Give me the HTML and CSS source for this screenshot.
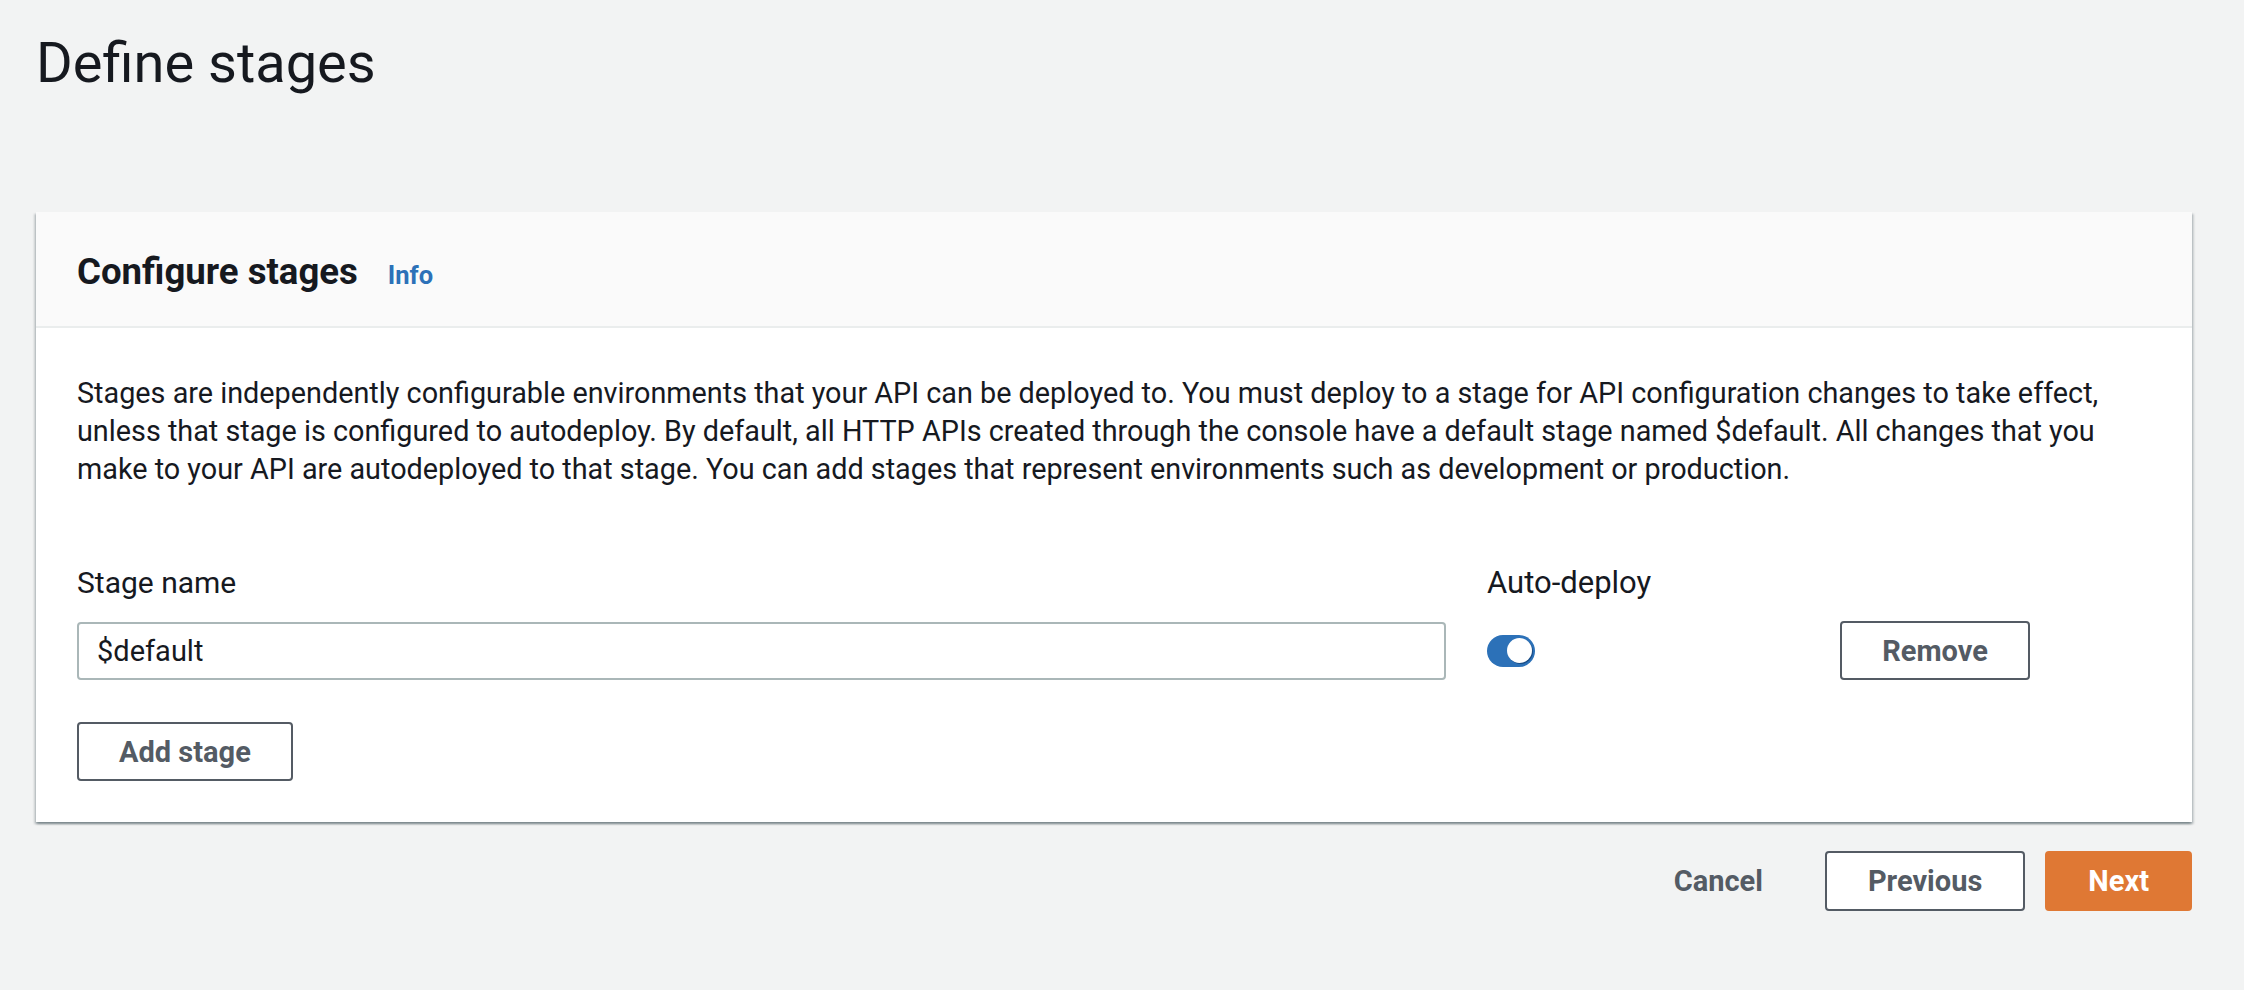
FILE: index.html
```html
<!DOCTYPE html>
<html lang="en">
<head>
<meta charset="utf-8">
<title>Define stages</title>
<link rel="stylesheet" href="styles.css">
</head>
<body>
<main class="page">
  <h1 class="title">Define stages</h1>
  <section class="card">
    <header class="card-header">
      <h2 class="card-title">Configure stages</h2>
      <a class="info-link" href="#">Info</a>
    </header>
    <div class="card-body">
      <p class="desc">Stages are independently configurable environments that your API can be deployed to. You must deploy to a stage for API configuration changes to take effect, unless that stage is configured to autodeploy. By default, all HTTP APIs created through the console have a default stage named $default. All changes that you make to your API are autodeployed to that stage. You can add stages that represent environments such as development or production.</p>
      <div class="stage-grid">
        <label class="field-label" for="stage-name">Stage name</label>
        <span class="field-label field-label-wide">Auto-deploy</span>
        <span class="empty"></span>
        <input class="text-input" id="stage-name" type="text" value="$default">
        <span class="toggle" role="switch" aria-checked="true"><span class="knob"></span></span>
        <button class="btn btn-normal btn-remove" type="button">Remove</button>
      </div>
      <button class="btn btn-normal btn-add" type="button">Add stage</button>
    </div>
  </section>
  <div class="footer">
    <button class="btn btn-link" type="button">Cancel</button>
    <button class="btn btn-normal btn-prev" type="button">Previous</button>
    <button class="btn btn-primary" type="button">Next</button>
  </div>
</main>
</body>
</html>
```
FILE: styles.css
```css
html, body {
  margin: 0;
  padding: 0;
}
body {
  background: #f2f3f3;
  color: #16191f;
  font-family: Roboto, "Noto Sans", "Liberation Sans", sans-serif;
}
.page {
  padding: 30px 52px 40px 36px;
}
.title {
  margin: 0 0 116px;
  font-size: 56px;
  line-height: 66px;
  font-weight: 400;
  color: #16191f;
}
.card {
  background: #ffffff;
  box-shadow: 0 2px 2px 0 rgba(0, 28, 36, 0.3), 2px 2px 2px 0 rgba(0, 28, 36, 0.15), -2px 2px 2px 0 rgba(0, 28, 36, 0.15);
}
.card-header {
  display: flex;
  align-items: baseline;
  gap: 30px;
  background: #fafafa;
  padding: 38px 41px 32px;
  border-bottom: 2px solid #eaeded;
}
.card-title {
  margin: 0;
  font-size: 36.6px;
  line-height: 44px;
  font-weight: 700;
  color: #16191f;
}
.info-link {
  font-size: 25.5px;
  font-weight: 700;
  color: #2c71b8;
  text-decoration: none;
}
.card-body {
  padding: 46px 41px 41px;
}
.desc {
  margin: 0;
  font-size: 28.8px;
  line-height: 38px;
  color: #16191f;
}
.stage-grid {
  margin-top: 76px;
  display: grid;
  grid-template-columns: 1369px 312px 190px;
  column-gap: 41px;
  row-gap: 19px;
  align-items: center;
}
.field-label {
  font-size: 30px;
  line-height: 38px;
  color: #16191f;
}
.field-label-wide {
  font-size: 31px;
}
.text-input {
  box-sizing: border-box;
  width: 100%;
  height: 58px;
  margin: 0;
  padding: 0 18px;
  border: 2px solid #aab7b8;
  border-radius: 4px;
  background: #ffffff;
  font-family: Roboto, "Noto Sans", sans-serif;
  font-size: 29px;
  color: #16191f;
  outline: none;
}
.toggle {
  box-sizing: border-box;
  display: flex;
  justify-content: flex-end;
  align-items: center;
  width: 48px;
  height: 32px;
  padding: 0 3px;
  border-radius: 16px;
  background: #2c71b8;
}
.knob {
  width: 25px;
  height: 25px;
  border-radius: 50%;
  background: #ffffff;
  box-shadow: 1px 1px 0 0 rgba(0, 30, 70, 0.45);
}
.btn {
  box-sizing: border-box;
  height: 59px;
  margin: 0;
  padding: 0 40px;
  border-radius: 4px;
  font-family: Roboto, "Noto Sans", sans-serif;
  font-size: 29px;
  font-weight: 700;
  cursor: pointer;
}
.btn-normal {
  background: #ffffff;
  border: 2px solid #545b64;
  color: #545b64;
}
.btn-remove {
  width: 190px;
  padding: 0;
}
.btn-add {
  display: block;
  margin-top: 42px;
}
.footer {
  margin-top: 29px;
  display: flex;
  justify-content: flex-end;
  gap: 20px;
}
.footer .btn {
  height: 60px;
}
.btn-prev {
  padding: 0 41px;
}
.btn-link {
  background: transparent;
  border: 2px solid transparent;
  color: #545b64;
}
.btn-primary {
  background: #df7834;
  border: 2px solid #df7834;
  color: #ffffff;
  padding: 0 41px;
}
```
